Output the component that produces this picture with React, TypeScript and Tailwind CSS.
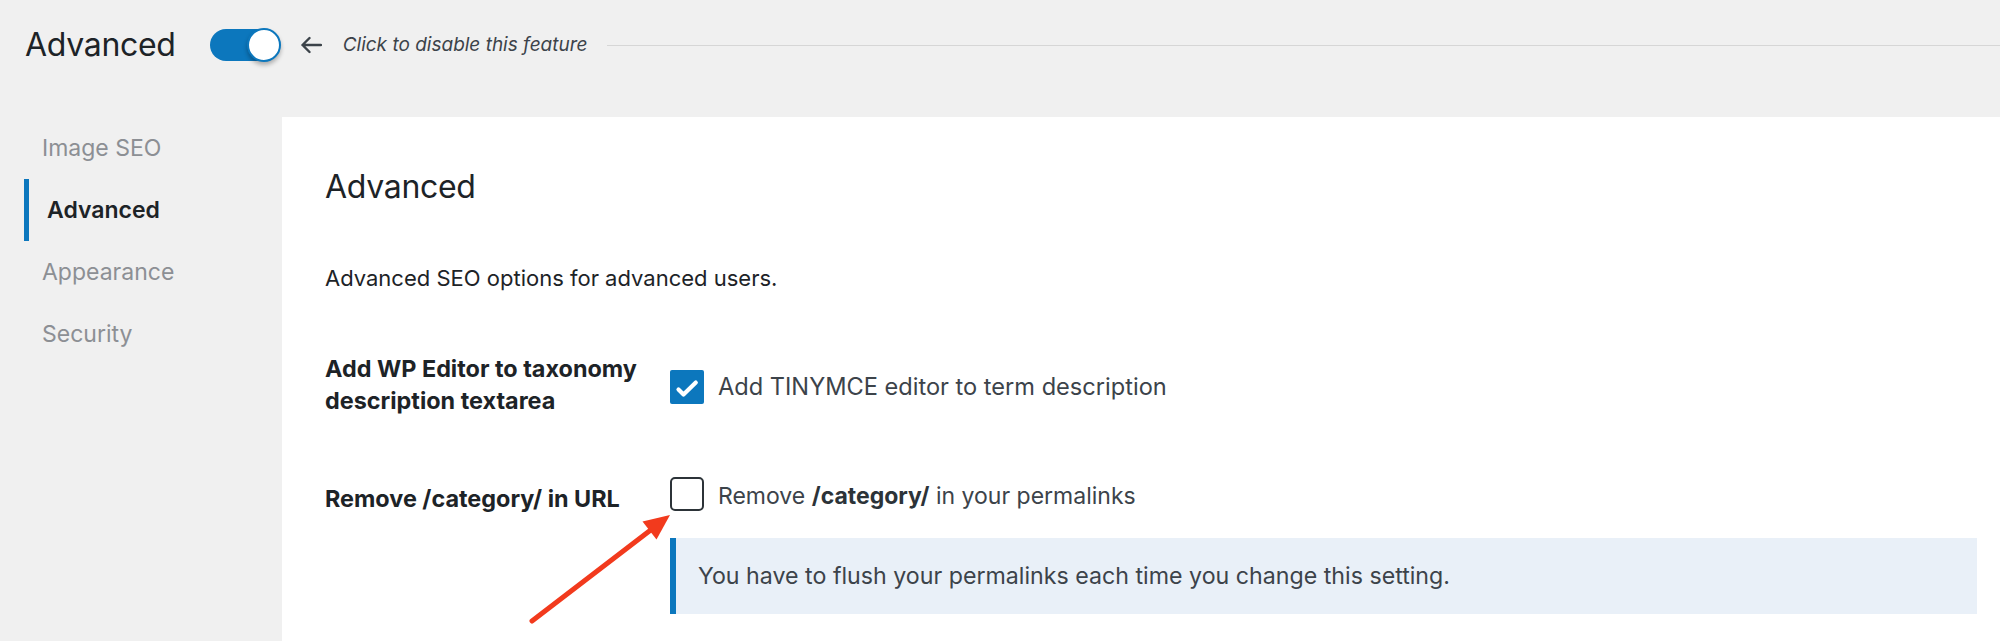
import React from "react";

const font = { fontFamily: "Inter, 'Noto Sans', sans-serif" };

function Toggle() {
  return (
    <div className="relative w-[70px] h-[32px] rounded-full bg-[#0c77bd]">
      <div className="absolute right-[-1px] top-[-1px] w-[34px] h-[34px] rounded-full bg-white border-2 border-[#0c77bd] shadow-[0_3px_4px_rgba(0,0,0,0.28)]" />
    </div>
  );
}

function Checkbox({ checked }: { checked?: boolean }) {
  if (checked) {
    return (
      <div className="w-[34px] h-[34px] shrink-0 rounded-[2px] bg-[#0c77bd] flex items-center justify-center">
        <svg width="34" height="34" viewBox="0 0 34 34">
          <path d="M8.5 19.5 L13.5 24.5 L25.8 12.6" fill="none" stroke="#fff" strokeWidth="4.2" strokeLinecap="round" strokeLinejoin="round" />
        </svg>
      </div>
    );
  }
  return <div className="w-[34px] h-[34px] shrink-0 rounded-[5px] bg-white border-2 border-[#2c3338]" />;
}

const menu = ["Image SEO", "Advanced", "Appearance", "Security"];

export default function App() {
  return (
    <div className="relative w-full h-[641px] overflow-hidden bg-[#f0f0f0] flex flex-col" style={font}>
      {/* header */}
      <div className="h-[90px] shrink-0 flex items-center pl-[25px]">
        <h1 className="text-[32px] leading-[40px] font-normal text-[#1d2327] tracking-[-0.3px]">Advanced</h1>
        <div className="ml-[34px]">
          <Toggle />
        </div>
        <svg className="ml-[20px]" width="22" height="18" viewBox="0 0 22 18">
          <path d="M21 9 H2.5 M9.5 2 L2.5 9 L9.5 16" fill="none" stroke="#3c434a" strokeWidth="2.4" strokeLinecap="round" strokeLinejoin="round" />
        </svg>
        <span className="ml-[21px] text-[19px] italic text-[#3c434a]">Click to disable this feature</span>
        <div className="ml-[19px] flex-1 border-t border-[#d6d6d6]" />
      </div>

      <div className="h-[27px] shrink-0" />

      <div className="flex flex-1 min-h-0">
        {/* sidebar */}
        <nav className="w-[282px] shrink-0 pl-[24px]">
          {menu.map((m) =>
            m === "Advanced" ? (
              <div key={m} className="h-[62px] flex items-center border-l-[5px] border-[#0c77bd] pl-[18px] text-[23px] font-semibold text-[#1d2327]">
                {m}
              </div>
            ) : (
              <div key={m} className="h-[62px] flex items-center pl-[18px] text-[23px] text-[#8c8f94]">
                {m}
              </div>
            )
          )}
        </nav>

        {/* panel */}
        <main className="flex-1 bg-white pl-[43px] pr-[23px] pt-[50px]">
          <h2 className="text-[32px] leading-[40px] font-normal text-[#1d2327] tracking-[-0.3px]">Advanced</h2>
          <p className="mt-[57px] text-[22px] leading-[28px] text-[#1d2327]">Advanced SEO options for advanced users.</p>

          <div className="mt-[61px] flex">
            <div className="w-[345px] shrink-0 text-[23.4px] leading-[32px] font-bold text-[#1d2327]">
              Add WP Editor to taxonomy
              <br />
              description textarea
            </div>
            <div className="pt-[3px] flex items-center gap-[14px]">
              <Checkbox checked />
              <span className="text-[23.6px] text-[#3c434a]">Add TINYMCE editor to term description</span>
            </div>
          </div>

          <div className="mt-[58px] flex">
            <div className="w-[345px] shrink-0 pt-[8px] text-[23.4px] leading-[32px] font-bold text-[#1d2327]">
              Remove /category/ in URL
            </div>
            <div className="flex-1">
              <div className="flex items-center gap-[14px]">
                <Checkbox />
                <span className="text-[23px] text-[#3c434a] pt-[4px]">
                  Remove <strong className="font-bold text-[#2c3338]">/category/</strong> in your permalinks
                </span>
              </div>
              <div className="mt-[24px] border-l-[6px] border-[#0c77bd] bg-[#e9f0f8] pl-[22px] py-[23px] text-[23.2px] leading-[30px] text-[#3c434a]">
                You have to flush your permalinks each time you change this setting.
              </div>
            </div>
          </div>
        </main>
      </div>

      {/* annotation arrow */}
      <svg className="absolute left-0 top-0 pointer-events-none" width="2000" height="641" viewBox="0 0 2000 641">
        <line x1="532" y1="621" x2="652" y2="529" stroke="#f23a1d" strokeWidth="5" strokeLinecap="round" />
        <polygon points="670,515 656.5,539.5 642.5,521.5" fill="#f23a1d" />
      </svg>
    </div>
  );
}
